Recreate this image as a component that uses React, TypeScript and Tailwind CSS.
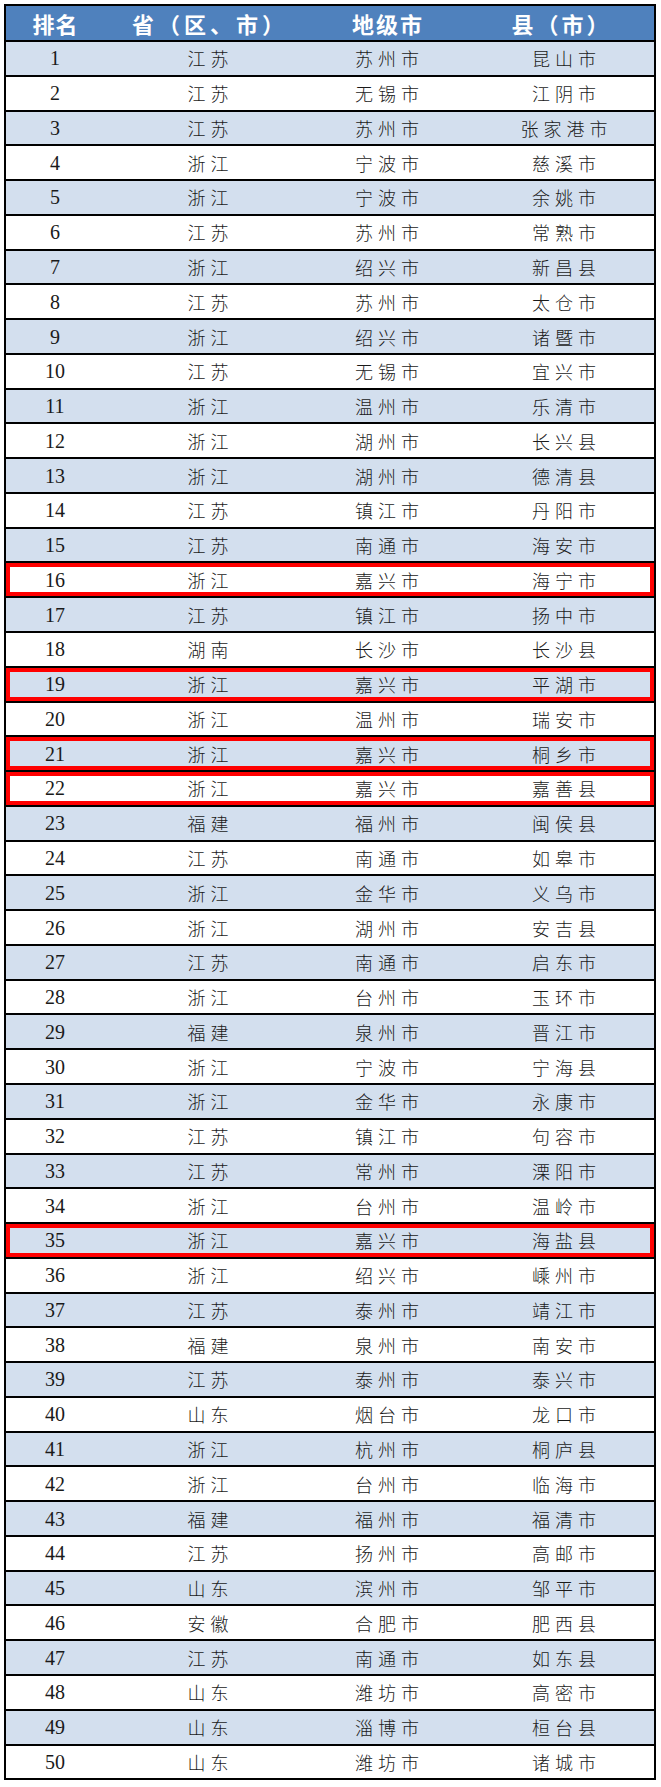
const rows: [number, string, string, string][] = [
  [1, "江苏", "苏州市", "昆山市"],
  [2, "江苏", "无锡市", "江阴市"],
  [3, "江苏", "苏州市", "张家港市"],
  [4, "浙江", "宁波市", "慈溪市"],
  [5, "浙江", "宁波市", "余姚市"],
  [6, "江苏", "苏州市", "常熟市"],
  [7, "浙江", "绍兴市", "新昌县"],
  [8, "江苏", "苏州市", "太仓市"],
  [9, "浙江", "绍兴市", "诸暨市"],
  [10, "江苏", "无锡市", "宜兴市"],
  [11, "浙江", "温州市", "乐清市"],
  [12, "浙江", "湖州市", "长兴县"],
  [13, "浙江", "湖州市", "德清县"],
  [14, "江苏", "镇江市", "丹阳市"],
  [15, "江苏", "南通市", "海安市"],
  [16, "浙江", "嘉兴市", "海宁市"],
  [17, "江苏", "镇江市", "扬中市"],
  [18, "湖南", "长沙市", "长沙县"],
  [19, "浙江", "嘉兴市", "平湖市"],
  [20, "浙江", "温州市", "瑞安市"],
  [21, "浙江", "嘉兴市", "桐乡市"],
  [22, "浙江", "嘉兴市", "嘉善县"],
  [23, "福建", "福州市", "闽侯县"],
  [24, "江苏", "南通市", "如皋市"],
  [25, "浙江", "金华市", "义乌市"],
  [26, "浙江", "湖州市", "安吉县"],
  [27, "江苏", "南通市", "启东市"],
  [28, "浙江", "台州市", "玉环市"],
  [29, "福建", "泉州市", "晋江市"],
  [30, "浙江", "宁波市", "宁海县"],
  [31, "浙江", "金华市", "永康市"],
  [32, "江苏", "镇江市", "句容市"],
  [33, "江苏", "常州市", "溧阳市"],
  [34, "浙江", "台州市", "温岭市"],
  [35, "浙江", "嘉兴市", "海盐县"],
  [36, "浙江", "绍兴市", "嵊州市"],
  [37, "江苏", "泰州市", "靖江市"],
  [38, "福建", "泉州市", "南安市"],
  [39, "江苏", "泰州市", "泰兴市"],
  [40, "山东", "烟台市", "龙口市"],
  [41, "浙江", "杭州市", "桐庐县"],
  [42, "浙江", "台州市", "临海市"],
  [43, "福建", "福州市", "福清市"],
  [44, "江苏", "扬州市", "高邮市"],
  [45, "山东", "滨州市", "邹平市"],
  [46, "安徽", "合肥市", "肥西县"],
  [47, "江苏", "南通市", "如东县"],
  [48, "山东", "潍坊市", "高密市"],
  [49, "山东", "淄博市", "桓台县"],
  [50, "山东", "潍坊市", "诸城市"],
];

// rows boxed in red in the original image
const marked = [16, 19, 21, 22, 35];

const cjk = { fontFamily: '"Noto Sans CJK SC", sans-serif' };
const serif = { fontFamily: '"Liberation Serif", "Times New Roman", serif' };

export default function App() {
  return (
    <div className="min-h-[1787px] bg-white pt-[4px] pl-[4px]">
      <div className="w-[652px] border-2 border-black">
        {/* Header */}
        <div
          className="grid grid-cols-[98px_208px_150px_192px] h-[34px] items-center bg-[#4f81bd] text-white font-bold text-[22px] leading-none"
          style={cjk}
        >
          <div className="text-center tracking-[1px] pl-[1px]">排名</div>
          <div className="text-center tracking-[4px] pl-[4px]">省（区、市）</div>
          <div className="text-center tracking-[2px] pl-[2px]">地级市</div>
          <div className="text-center tracking-[3px] pl-[7px]">县（市）</div>
        </div>

        {/* Body */}
        {rows.map(([rank, prov, city, county]) => (
          <div
            key={rank}
            className={
              "grid grid-cols-[98px_208px_150px_192px] h-[34.78px] border-t-2 border-black items-center text-[#1a1a1a] " +
              (rank % 2 === 1 ? "bg-[#d3dfee] " : "bg-white ") +
              (marked.includes(rank) ? "shadow-[inset_0_0_0_4px_#ff0000]" : "")
            }
          >
            <div className="text-center text-[20px] leading-none" style={serif}>
              {rank}
            </div>
            <div className="text-center text-[18px] font-light tracking-[5px] pl-[5px] leading-none" style={cjk}>
              {prov}
            </div>
            <div className="text-center text-[18px] font-light tracking-[5px] pl-[5px] leading-none" style={cjk}>
              {city}
            </div>
            <div className="text-center text-[18px] font-light tracking-[5px] pl-[17px] leading-none" style={cjk}>
              {county}
            </div>
          </div>
        ))}
      </div>
    </div>
  );
}
